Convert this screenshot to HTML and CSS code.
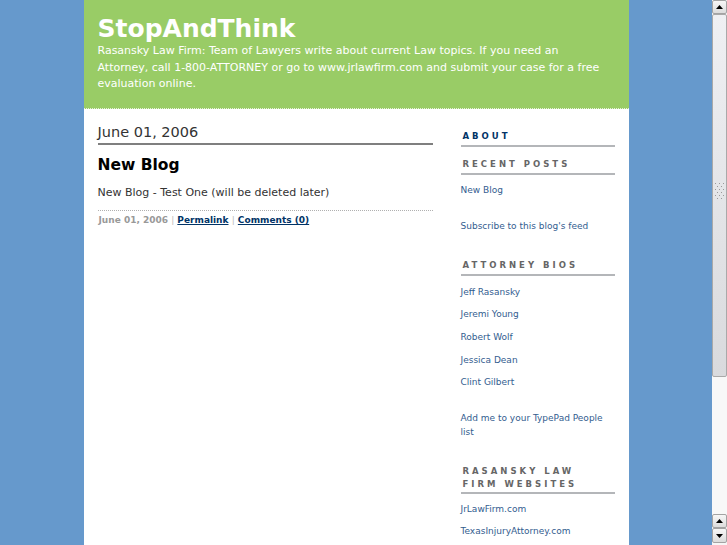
FILE: index.html
```html
<!DOCTYPE html>
<html lang="en">
<head>
<meta charset="utf-8">
<title>StopAndThink</title>
<link rel="stylesheet" href="styles.css">
</head>
<body>
<div class="viewport">
  <div class="page">
    <div class="container">
      <header class="banner">
        <h1 class="banner-title">StopAndThink</h1>
        <p class="banner-desc">Rasansky Law Firm: Team of Lawyers write about current Law topics. If you need an Attorney, call 1-800-ATTORNEY or go to www.jrlawfirm.com and submit your case for a free evaluation online.</p>
      </header>
      <div class="content">
        <main class="main">
          <h2 class="date-header">June 01, 2006</h2>
          <div class="entry">
            <h3 class="entry-title">New Blog</h3>
            <p class="entry-body">New Blog - Test One (will be deleted later)</p>
            <p class="entry-footer"><span class="posted">June 01, 2006</span> <span class="sep">|</span> <a class="footer-link" href="#">Permalink</a> <span class="sep">|</span> <a class="footer-link" href="#">Comments (0)</a></p>
          </div>
        </main>
        <aside class="sidebar">
          <div class="module module-about">
            <h2 class="module-title"><a class="module-title-link" href="#">About</a></h2>
          </div>
          <div class="module">
            <h2 class="module-title">Recent Posts</h2>
            <ul class="module-list">
              <li><a class="side-link" href="#">New Blog</a></li>
            </ul>
          </div>
          <div class="module">
            <ul class="module-list">
              <li><a class="side-link" href="#">Subscribe to this blog's feed</a></li>
            </ul>
          </div>
          <div class="module">
            <h2 class="module-title">Attorney Bios</h2>
            <ul class="module-list">
              <li><a class="side-link" href="#">Jeff Rasansky</a></li>
              <li><a class="side-link" href="#">Jeremi Young</a></li>
              <li><a class="side-link" href="#">Robert Wolf</a></li>
              <li><a class="side-link" href="#">Jessica Dean</a></li>
              <li><a class="side-link" href="#">Clint Gilbert</a></li>
            </ul>
          </div>
          <div class="module">
            <ul class="module-list">
              <li><a class="side-link" href="#">Add me to your TypePad People list</a></li>
            </ul>
          </div>
          <div class="module">
            <h2 class="module-title module-title-wrap">Rasansky Law<br>Firm Websites</h2>
            <ul class="module-list">
              <li><a class="side-link" href="#">JrLawFirm.com</a></li>
              <li><a class="side-link" href="#">TexasInjuryAttorney.com</a></li>
            </ul>
          </div>
        </aside>
      </div>
    </div>
  </div>
  <div class="scrollbar">
    <div class="sb-btn">
      <svg class="sb-arrow" width="7" height="4" viewBox="0 0 7 4"><polygon points="0,4 3.5,0 7,4" fill="#000"/></svg>
    </div>
    <div class="sb-thumb">
      <svg class="sb-grip" width="9" height="16" viewBox="0 0 9 16">
        <g fill="#9a9a9a">
          <rect x="0" y="0" width="1" height="1"/><rect x="4" y="0" width="1" height="1"/><rect x="8" y="0" width="1" height="1"/>
          <rect x="2" y="3" width="1" height="1"/><rect x="6" y="3" width="1" height="1"/>
          <rect x="0" y="6" width="1" height="1"/><rect x="4" y="6" width="1" height="1"/><rect x="8" y="6" width="1" height="1"/>
          <rect x="2" y="9" width="1" height="1"/><rect x="6" y="9" width="1" height="1"/>
          <rect x="0" y="12" width="1" height="1"/><rect x="4" y="12" width="1" height="1"/><rect x="8" y="12" width="1" height="1"/>
          <rect x="2" y="15" width="1" height="1"/><rect x="6" y="15" width="1" height="1"/>
        </g>
      </svg>
    </div>
    <div class="sb-track"></div>
    <div class="sb-btn">
      <svg class="sb-arrow" width="7" height="4" viewBox="0 0 7 4"><polygon points="0,4 3.5,0 7,4" fill="#000"/></svg>
    </div>
    <div class="sb-btn sb-btn-last">
      <svg class="sb-arrow" width="7" height="4" viewBox="0 0 7 4"><polygon points="0,0 7,0 3.5,4" fill="#000"/></svg>
    </div>
  </div>
</div>
</body>
</html>
```

FILE: styles.css
```css
html, body {
  margin: 0;
  padding: 0;
  height: 100%;
}

body {
  font-family: "DejaVu Sans", Verdana, sans-serif;
  color: #333;
}

.viewport {
  display: flex;
  height: 100vh;
  overflow: hidden;
}

.page {
  flex: 1;
  background: #6699cc;
  overflow: hidden;
}

.container {
  width: 545px;
  margin: 0 auto;
  background: #fff;
  min-height: 100%;
}

/* Banner */
.banner {
  background: #99cc66;
  padding: 14px 14px 15.5px;
  border-bottom: 1px dotted #e6f2da;
}

.banner-title {
  margin: 0;
  font-size: 25px;
  line-height: 29px;
  font-weight: bold;
  color: #fff;
}

.banner-desc {
  margin: 0;
  max-width: 510px;
  font-size: 11px;
  line-height: 16.5px;
  color: #fff;
}

/* Content columns */
.content {
  display: flex;
  gap: 28px;
  padding: 14px 14px 0;
}

.main {
  width: 335px;
  flex: none;
}

.date-header {
  margin: 0;
  font-size: 14.5px;
  line-height: 18px;
  font-weight: normal;
  color: #333;
  padding-bottom: 1.5px;
  border-bottom: 2px solid #7f7f7f;
}

.entry-title {
  margin: 11px 0 0;
  font-size: 15.5px;
  line-height: 19px;
  font-weight: bold;
  color: #000;
}

.entry-body {
  margin: 10px 0 0;
  font-size: 11px;
  line-height: 16.5px;
  color: #333;
}

.entry-footer {
  margin: 9px 0 0;
  padding: 3px 0 0 1px;
  border-top: 1px dotted #b0b0b0;
  font-size: 9px;
  line-height: 12px;
  font-weight: bold;
  color: #999;
}

.sep {
  color: #bbb;
  font-weight: normal;
}

.footer-link {
  color: #003366;
  text-decoration: underline;
}

/* Sidebar */
.sidebar {
  width: 154px;
  flex: none;
  display: flex;
  flex-direction: column;
  padding-top: 2.5px;
}

.module {
  margin-bottom: 22px;
}

.module-about {
  margin-bottom: 7px;
}

.module-title {
  margin: 4px 0 0;
  padding: 0 0 2px 2px;
  font-size: 8.5px;
  line-height: 13px;
  letter-spacing: 3px;
  font-weight: bold;
  text-transform: uppercase;
  color: #666;
  border-bottom: 2px solid #b4b6b9;
}

.module-title-wrap {
  padding-bottom: 1px;
}

.module-title-link {
  color: #003366;
  text-decoration: none;
}

.module-list {
  list-style: none;
  margin: 0;
  padding: 0;
  display: flex;
  flex-direction: column;
  gap: 8.7px;
  font-size: 9px;
  line-height: 14px;
}

.module-title + .module-list {
  margin-top: 8.5px;
}

.module-title-wrap + .module-list {
  margin-top: 7.5px;
}

.side-link {
  color: #335d8f;
  text-decoration: none;
}

/* Scrollbar imitation */
.scrollbar {
  width: 15px;
  flex: none;
  display: flex;
  flex-direction: column;
  background: #f6f6f6;
}

.sb-btn {
  height: 14px;
  flex: none;
  box-sizing: border-box;
  border: 1px solid #a3a3a3;
  border-radius: 2px;
  background: linear-gradient(#f7f7f7, #dcdcdc);
  display: flex;
  align-items: center;
  justify-content: center;
}

.sb-btn-last {
  height: 15px;
  margin-bottom: 2px;
}

.sb-arrow {
  display: block;
}

.sb-thumb {
  height: 363px;
  flex: none;
  box-sizing: border-box;
  border: 1px solid #a9a9a9;
  border-radius: 2px;
  background: linear-gradient(#eff0f3, #d9dadd);
  display: flex;
  align-items: center;
  justify-content: center;
  padding-bottom: 10px;
}

.sb-grip {
  display: block;
}

.sb-track {
  flex: 1;
  background: #f8f8f8;
}
```
